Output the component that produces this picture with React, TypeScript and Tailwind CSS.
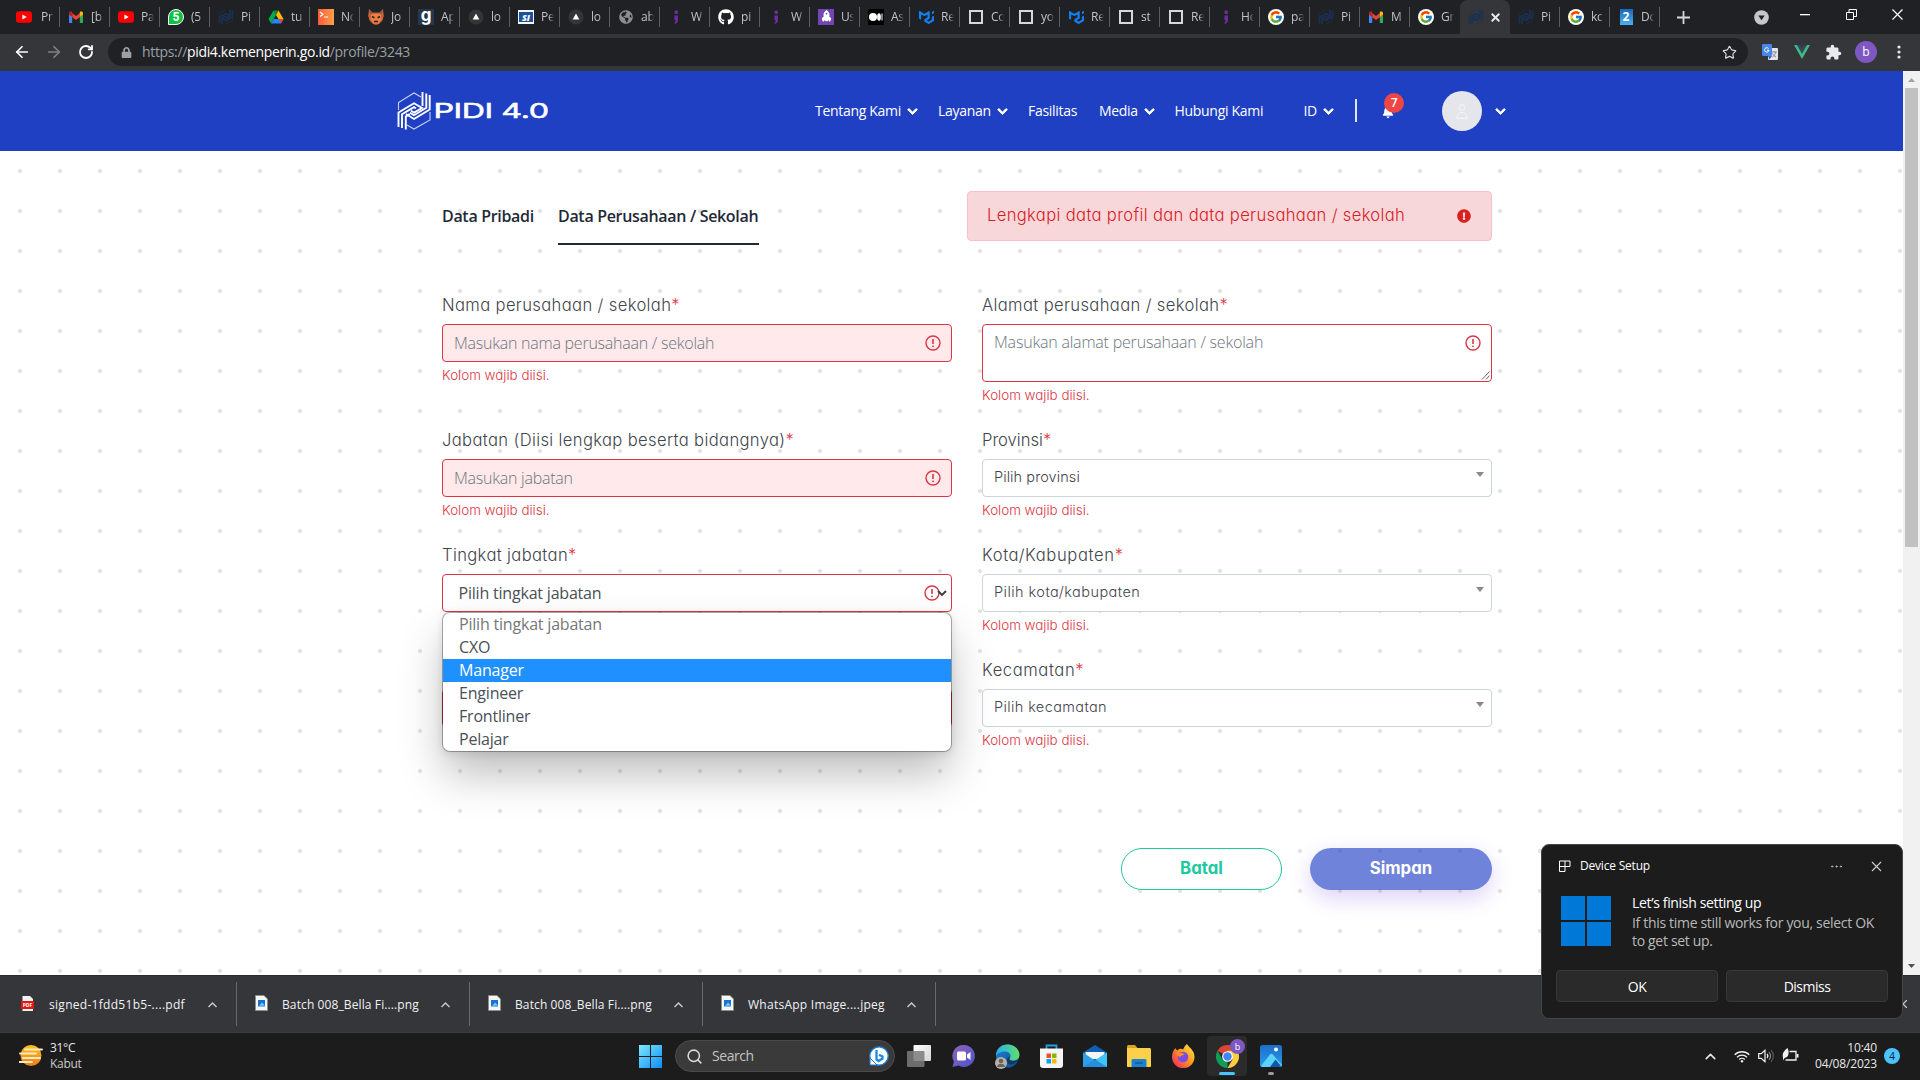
import type { ReactNode } from "react";
import { FaBell, FaChevronDown, FaExclamationCircle, FaGithub, FaGlobeAmericas, FaLock, FaRocket } from "react-icons/fa";
import { FcGoogle } from "react-icons/fc";
import { MdExtension } from "react-icons/md";
import { SiMui } from "react-icons/si";
import { MoreHorizontal, RotateCw, Search, Star, X, ArrowLeft, ArrowRight, ChevronUp } from "lucide-react";

/* ---------- favicons ---------- */

const YouTube = () => (
  <svg width="16" height="16" viewBox="0 0 16 16"><rect y="2.3" width="16" height="11.4" rx="3" fill="#f00" /><path d="M6.4 5.5v5l4.3-2.5z" fill="#fff" /></svg>
);
const Gmail = () => (
  <svg width="16" height="16" viewBox="0 0 16 16">
    <path d="M1 14V5l3.2 2.4V14z" fill="#4285f4" /><path d="M15 14V5l-3.2 2.4V14z" fill="#34a853" />
    <path d="M4.2 8.2V4L8 6.9 11.8 4v4.2L8 11z" fill="#ea4335" />
    <path d="M1 5.6V4c0-1.700 1.900-2 3-1.200l.2.2v5z" fill="#c5221f" /><path d="M15 5.600V4c0-1.700-1.900-2-3-1.200l-.2.2v5z" fill="#fbbc04" />
  </svg>
);
const WhatsApp = () => (
  <span className="flex h-4 w-4 items-center justify-center rounded-full rounded-bl-[3px] border border-white bg-[#12c143] font-['Roboto',sans-serif] text-[12px] leading-none font-bold text-white">5</span>
);
const Pidi = () => (
  <svg width="16" height="16" viewBox="0 0 16 16" fill="none" stroke="#1a3152" strokeWidth="1.7">
    <path d="M1.500 14.500V8L8 4.700l3.500 1.800M4 15V9.200L8 7.200" /><path d="M14.500 1.500V8L8 11.300 4.500 9.500M12 1v6L8 9" /><path d="M8 15l6.500-3.500V9" strokeWidth=".8" /><path d="M1.500 6V4.500L8 1" strokeWidth=".8" />
  </svg>
);
const Drive = () => (
  <svg width="16" height="16" viewBox="0 0 16 16"><path d="M5.500 1.500h5L8 6z" fill="#188038" /><path d="M5.500 1.500L8 6l-5 8.500L.5 10z" fill="#00ac47" /><path d="M10.500 1.500L15.500 10h-5L8 6z" fill="#ffba00" /><path d="M5.700 10h9.800L13 14.500H3z" fill="#2684fc" /><path d="M13 14.500L15.500 10h-5z" fill="#ea4335" /></svg>
);
const Terminal = () => (
  <svg width="16" height="16" viewBox="0 0 16 16"><defs><linearGradient id="term" x1="0" x2="1"><stop stopColor="#fb5b3a" /><stop offset="1" stopColor="#ffa04a" /></linearGradient></defs><rect width="16" height="16" fill="url(#term)" /><path d="M2 3l3 2.300L2 7.500M6 8h4" stroke="#fff" fill="none" strokeWidth="1.200" /></svg>
);
const Fox = () => (
  <svg width="16" height="16" viewBox="0 0 16 16"><path d="M1 0l3.500 3.500h7L15 0l.8 7-1.300 4.500-3.500 3.500-3 1-3-1-3.500-3.500L.2 7z" fill="#c6613a" /><path d="M3.500 5h9l1 5-3 4.500h-5l-3-4.500z" fill="#ef7f45" /><path d="M4 7.500l2.500 1.300M12 7.500L9.500 8.800M6 12.500h4" stroke="#2b1f1b" strokeWidth="1.500" /><path d="M1.500 2.500l2.500 2M14.500 2.500l-2.500 2" stroke="#3a5f7d" /></svg>
);
const LetterG = () => <span className="flex h-4 w-4 items-center justify-center bg-[#27384d] pb-1 font-['Inter',sans-serif] text-[17px] leading-none font-bold text-white">g</span>;
const Vercel = () => (
  <svg width="16" height="16" viewBox="0 0 16 16"><circle cx="8" cy="8" r="7.500" fill="#353535" /><path d="M8 4.500L11.300 10.500H4.700z" fill="#fff" /></svg>
);
const Sitepoint = () => <span className="flex h-3.5 w-4 items-center justify-center bg-[#f4f7fb]"><span className="flex h-2.5 w-3.5 items-center justify-center bg-[#1c5299] text-[9px] leading-none font-extrabold text-white italic">SI</span></span>;
const Globe = () => <FaGlobeAmericas size={14} color="#8b8d90" />;
const Semicolon = () => <svg width="16" height="16" viewBox="0 0 16 16" fill="#6f2da0"><rect x="6.500" y="1.500" width="3.400" height="3.400" rx="1" /><path d="M6.500 6.500h3.400v4.500c0 2.500-1 3.500-3.200 3.800V13c1-.3 1.200-.8 1-1.800H6.500z" /></svg>;
const Github = () => <FaGithub size={16} color="#fff" />;
const Rocket = () => <span className="flex h-4 w-4 items-center justify-center bg-[#7446b4]"><FaRocket size={11} color="#fff" className="-rotate-45" /></span>;
const Medium = () => <svg width="16" height="16" viewBox="0 0 16 16"><rect width="16" height="16" fill="#000" /><circle cx="5" cy="8" r="4" fill="#fff" /><ellipse cx="11" cy="8" rx="1.900" ry="3.800" fill="#fff" /><rect x="13.500" y="4.500" width="1" height="7" fill="#fff" /></svg>;
const Mui = () => <SiMui size={15} color="#1280f5" />;
const Square = () => <span className="h-3.5 w-3.5 border-2 border-[#d8d8d8]" />;
const Google = () => <span className="flex h-4 w-4 items-center justify-center rounded-full bg-white"><FcGoogle size={14} /></span>;
const Two = () => <span className="flex h-4 w-[13px] items-center justify-center bg-gradient-to-b from-[#1a67b8] to-[#4bb0f0] text-[12px] leading-none font-bold text-white">2</span>;

const tabs: { icon: () => ReactNode; text: string; active?: boolean }[] = [
  { icon: YouTube, text: "Pr" }, { icon: Gmail, text: "[b" }, { icon: YouTube, text: "Pa" }, { icon: WhatsApp, text: "(5" },
  { icon: Pidi, text: "Pi" }, { icon: Drive, text: "tu" }, { icon: Terminal, text: "No" }, { icon: Fox, text: "Jo" },
  { icon: LetterG, text: "Ap" }, { icon: Vercel, text: "lo" }, { icon: Sitepoint, text: "Pe" }, { icon: Vercel, text: "lo" },
  { icon: Globe, text: "ab" }, { icon: Semicolon, text: "W" }, { icon: Github, text: "pi" }, { icon: Semicolon, text: "W" },
  { icon: Rocket, text: "Us" }, { icon: Medium, text: "As" }, { icon: Mui, text: "Re" }, { icon: Square, text: "Co" },
  { icon: Square, text: "yo" }, { icon: Mui, text: "Re" }, { icon: Square, text: "st" }, { icon: Square, text: "Re" },
  { icon: Semicolon, text: "Ho" }, { icon: Google, text: "pa" }, { icon: Pidi, text: "Pi" }, { icon: Gmail, text: "M" },
  { icon: Google, text: "Gr" }, { icon: Pidi, text: "", active: true }, { icon: Pidi, text: "Pi" }, { icon: Google, text: "kc" },
  { icon: Two, text: "Dc" },
];

function TabStrip() {
  return (
    <div className="flex h-[34px] shrink-0 items-center bg-[#202124]">
      <div className="w-2.5 shrink-0" />
      {tabs.map((t, i) => (
        <div key={i} className={t.active ? "relative flex h-full w-[50px] shrink-0 items-center rounded-t-lg bg-[#35363a] pl-2" : "flex h-5 w-[50px] shrink-0 items-center pl-2 " + (tabs[i + 1]?.active ? "" : "border-r border-[#5a5c60]")}>
          <span className={"flex h-4 w-4 shrink-0 items-center justify-center " + (i === 0 ? "-ml-0.5" : "")}><t.icon /></span>
          {t.active ? (
            <X size={13} strokeWidth={3.500} className="ml-[5px] text-[#e8eaed]" />
          ) : (
            <span className={"w-[13px] overflow-hidden text-[12px] leading-5 tracking-[-0.2px] whitespace-nowrap text-[#bfc3c8] [mask-image:linear-gradient(to_right,black_60%,transparent)] " + (i === 0 ? "ml-[9px]" : "ml-[7px]")}>{t.text}</span>
          )}
        </div>
      ))}
      <svg width="13" height="13" viewBox="0 0 13 13" className="ml-[17px]"><path d="M6.500 0v13M0 6.500h13" stroke="#d5d7da" strokeWidth="1.800" /></svg>
      <svg width="15" height="15" viewBox="0 0 15 15" className="ml-[64px]"><circle cx="7.500" cy="7.500" r="7.300" fill="#c4c7cb" /><path d="M4.300 5.500h6.400L7.500 10.300z" fill="#202124" /></svg>
      <svg width="10" height="2" className="-mt-1 ml-[31px]"><rect width="10" height="1.300" fill="#fff" /></svg>
      <svg width="11" height="11" viewBox="0 0 11 11" fill="none" stroke="#fff" className="-mt-1.5 ml-[36px]"><path d="M.5 3.500h7v7h-7zM3 3.500V.5h7.500v7h-3" /></svg>
      <svg width="11" height="11" viewBox="0 0 11 11" className="-mt-1.5 ml-[35px]"><path d="M.5.5l10 10M10.500.5l-10 10" stroke="#fff" strokeWidth="1.200" /></svg>
    </div>
  );
}

function Toolbar() {
  return (
    <div className="flex h-[37px] shrink-0 items-center bg-[#35363a] pb-px pl-[13px]">
      <ArrowLeft size={18} strokeWidth={2.300} className="text-white" />
      <ArrowRight size={18} strokeWidth={2.300} className="ml-[14px] text-[#7f8186]" />
      <RotateCw size={16} strokeWidth={2.700} className="ml-[15px] text-white" />
      <div className="ml-[14px] flex h-7 w-[1640px] items-center rounded-full bg-[#202124] pr-[11px] pl-[12px]">
        <FaLock size={11} color="#9aa0a6" className="ml-px" />
        <span className="-mt-px ml-2.5 text-[14px] tracking-[-0.34px] text-[#9aa0a6]">
          https://<span className="text-white">pidi4.kemenperin.go.id</span>/profile/3243
        </span>
        <Star size={15} strokeWidth={1.900} className="ml-auto text-[#d5d7da]" />
      </div>
      <svg width="16" height="16" viewBox="0 0 16 16" className="ml-[14px]">
        <rect x="6" y="4" width="10" height="12" rx="1" fill="#e3e5e8" /><rect width="10" height="12" rx="1" fill="#4a86e8" /><path d="M6.500 4.500a2.200 2.200 0 1 0 .5 1.800H5" stroke="#fff" fill="none" /><path d="M9 8h6M12 7v1M10.500 13c2-1.500 3-3 3-5M10.500 9.500c.8 1.800 2 3 3.500 3.500" stroke="#6b7b8c" strokeWidth=".8" fill="none" /><path d="M6 12h4l-2.500 3.500z" fill="#3563c9" />
      </svg>
      <svg width="16" height="16" viewBox="0 0 16 16" className="ml-4"><path d="M0 1h3.200L8 9.500 12.800 1H16L8 15z" fill="#41b883" /><path d="M3.200 1h3L8 4.200 9.800 1h3L8 9.500z" fill="#35495e" /></svg>
      <MdExtension size={17} color="#e8eaed" className="ml-[15px]" />
      <span className="ml-[13px] flex h-[22px] w-[22px] items-center justify-center rounded-full bg-[#7e57c2] pb-px text-[12px] text-white">b</span>
      <svg width="4" height="14" viewBox="0 0 4 14" fill="#e8eaed" className="ml-5"><circle cx="2" cy="2" r="1.600" /><circle cx="2" cy="7" r="1.600" /><circle cx="2" cy="12" r="1.600" /></svg>
    </div>
  );
}

/* ---------- site header ---------- */

function Logo() {
  return (
    <svg width="152" height="40" viewBox="0 0 152 40" fill="none" stroke="#fff">
      <g strokeWidth="1.100" opacity=".75"><path d="M1.500 19v-7.500L17 2l7 4" /><path d="M33 21v8L17 38l-7-4" /></g>
      <g strokeWidth="1.900">
        <path d="M1.500 36V21.500L17 12.300l8 4.700-8 4.600-3-1.800" /><path d="M5 37V23.300l12-7.200 2 1.200" /><path d="M8.800 38.500V25.500l4-2.400" />
        <path d="M32.700 4v14.500L17 28l-8-5" /><path d="M29.300 2.500v14.200L17 24.200l-4-2.500" /><path d="M25.500 1v14" />
      </g>
      <text x="36.500" y="27" textLength="115" lengthAdjust="spacingAndGlyphs" fill="#fff" stroke="#fff" strokeWidth=".5" fontSize="20.500" fontWeight="400" fontFamily="Inter, sans-serif">PIDI 4.0</text>
    </svg>
  );
}
const Caret = () => <FaChevronDown size={11} stroke="currentColor" strokeWidth={45} className="mt-[3px]" />;

function Header() {
  return (
    <header className="flex h-20 shrink-0 items-center bg-[#2040c4] pl-[397px] text-[14px] tracking-[-0.3px] whitespace-nowrap text-white">
      <Logo />
      <nav className="-mt-0.5 ml-[266px] flex items-center">
        <span className="flex w-[123px] items-center gap-1.5">Tentang Kami<Caret /></span>
        <span className="flex w-[90px] items-center gap-1.5">Layanan<Caret /></span>
        <span className="w-[71px]">Fasilitas</span>
        <span className="flex w-[75.500px] items-center gap-1.5">Media<Caret /></span>
        <span className="w-[129px]">Hubungi Kami</span>
        <span className="flex w-[51.500px] items-center gap-1.5">ID<Caret /></span>
      </nav>
      <span className="-mt-px h-[23px] w-0.5 bg-[#dfe5fa]" />
      <span className="relative ml-[25px] flex h-[22px] w-[22px] items-end">
        <FaBell size={12} className="mb-[4px]" />
        <span className="absolute -top-[7px] left-[2px] flex h-5 w-5 items-center justify-center rounded-full bg-[#ee4545] pb-px text-[12px] font-semibold">7</span>
      </span>
      <span className="ml-[38px] flex h-10 w-10 items-center justify-center rounded-full bg-[#e4e6eb]">
        <svg width="12" height="15" viewBox="0 0 12 15" fill="none" stroke="#f4f5f8"><circle cx="6" cy="3.500" r="2.800" /><path d="M1 14.300C1 6.500 11 6.500 11 14.300z" /></svg>
      </span>
      <span className="-mt-0.5 ml-[13px]"><Caret /></span>
    </header>
  );
}

/* ---------- form ---------- */

const Invalid = ({ className }: { className?: string }) => (
  <svg width="16" height="16" viewBox="0 0 16 16" fill="none" stroke="#dc3545" className={className}><circle cx="8" cy="8" r="7" strokeWidth="1.400" /><path d="M8 4v5" strokeWidth="1.600" /><circle cx="8" cy="11.300" r=".5" strokeWidth="1" fill="#dc3545" /></svg>
);

function Field({ label, children, covered, tracking = "tracking-[0.36px]" }: { label: string; children: ReactNode; covered?: boolean; tracking?: string }) {
  return (
    <div>
      <div className={"mb-2 h-6 font-['Inter',sans-serif] text-[16.6px] leading-[26px] font-light whitespace-nowrap text-[#3f464d] [font-feature-settings:'cv11'] " + tracking}>
        {label}{label && <span className="text-[#dc3545]">*</span>}
      </div>
      {children}
      {!covered && <div className="mt-[3px] font-['Inter',sans-serif] text-[13.4px] leading-5 font-light text-[#dc3545] [font-feature-settings:'cv11']">Kolom wajib diisi.</div>}
    </div>
  );
}
function TextInput({ text }: { text: string }) {
  return (
    <div className="flex h-[38px] items-center justify-between rounded border border-[#dc3545] bg-[#ffe9ea] pr-[10px] pl-[11px] text-[16px] font-light tracking-[-0.24px] text-[#6c757d]">
      <span className="-mt-px">{text}</span><Invalid />
    </div>
  );
}
function Combo({ text, tracking }: { text: string; tracking: string }) {
  return (
    <div className="flex h-[38px] items-center justify-between rounded border border-[#ced4da] bg-white pr-[7px] pl-[11px]">
      <span className={"-mt-[3px] font-['Inter',sans-serif] text-[14.5px] font-light text-[#3f464d] [font-feature-settings:'cv11'] " + tracking}>{text}</span>
      <svg width="8" height="5" className="mb-2"><path d="M0 0h8L4 5z" fill="#888" /></svg>
    </div>
  );
}

function LevelSelect() {
  const options = ["Pilih tingkat jabatan", "CXO", "Manager", "Engineer", "Frontliner", "Pelajar"];
  return (
    <div className="relative flex h-[38px] items-center rounded border border-[#dc3545] bg-white pl-[15.500px] text-[16px] tracking-[-0.2px] text-[#495057]">
      <span className="-mt-px">{options[0]}</span>
      <Invalid className="ml-auto" />
      <svg width="10" height="7" viewBox="0 0 10 7" className="mr-1 -ml-[3px]"><path d="M1 1l4 4 4-4" fill="none" stroke="#343a40" strokeWidth="1.800" /></svg>
      <div className="absolute top-[37px] -left-px z-10 w-[510px] overflow-hidden rounded-lg border border-black/30 bg-white bg-clip-padding shadow-[0_24px_44px_-2px_rgba(0,0,0,0.26),0_2px_8px_rgba(0,0,0,0.1)]">
        {options.map((o, i) => (
          <div key={o} className={"h-[23px] pl-4 leading-[22px] " + (i === 2 ? "bg-[#1e90ff] font-medium text-white" : i === 0 ? "text-[#75787b]" : "")}>{o}</div>
        ))}
      </div>
    </div>
  );
}

function ProfilePage() {
  return (
    <main className="flex grow flex-col bg-white bg-[radial-gradient(circle,#e3e3e4_1.700px,transparent_2.300px)] bg-[size:40px_40px] pt-10 pl-[442px] text-[#495057]">
      <div className="flex h-[101px] w-[1050px] items-start justify-between">
        <div className="flex gap-6 text-[16px] leading-[50px] font-semibold tracking-[-0.32px] text-[#1f2937]">
          <span className="w-[92px] whitespace-nowrap">Data Pribadi</span>
          <span className="h-[54px] w-[201px] border-b-2 border-[#1f2937] whitespace-nowrap">Data Perusahaan / Sekolah</span>
        </div>
        <div className="flex h-[50px] w-[525px] items-center justify-between rounded border border-[#f5c2c7] bg-[#f8d7da] pr-5 pb-px pl-[19px]">
          <span className="font-['Inter',sans-serif] text-[16.6px] font-light tracking-[0.34px] whitespace-nowrap text-[#d9201f] [font-feature-settings:'cv11']">Lengkapi data profil dan data perusahaan / sekolah</span>
          <FaExclamationCircle size={14} color="#d9201f" />
        </div>
      </div>
      <div className="grid w-[1050px] grid-cols-[510px_510px] grid-rows-[135px_115px_115px_115px] gap-x-[30px]">
        <Field label="Nama perusahaan / sekolah"><TextInput text="Masukan nama perusahaan / sekolah" /></Field>
        <Field label="Alamat perusahaan / sekolah">
          <div className="relative flex h-[58px] items-start justify-between rounded border border-[#dc3545] bg-white pt-[6px] pr-[10px] pl-[11px] text-[16px] leading-[22px] font-light tracking-[-0.2px] text-[#6c757d]">
            Masukan alamat perusahaan / sekolah<Invalid className="mt-1" />
            <svg width="9" height="9" className="absolute right-px bottom-px"><path d="M1 8.500l7.500-8M5 8.500l3.500-4" stroke="#555" strokeWidth=".9" /></svg>
          </div>
        </Field>
        <Field label="Jabatan (Diisi lengkap beserta bidangnya)"><TextInput text="Masukan jabatan" /></Field>
        <Field label="Provinsi" tracking="tracking-[0px]"><Combo text="Pilih provinsi" tracking="tracking-[0.08px]" /></Field>
        <Field label="Tingkat jabatan" covered><LevelSelect /></Field>
        <Field label="Kota/Kabupaten" tracking="tracking-[0.62px]"><Combo text="Pilih kota/kabupaten" tracking="tracking-[0.45px]" /></Field>
        <Field label="" covered><TextInput text="" /></Field>
        <Field label="Kecamatan" tracking="tracking-[0.58px]"><Combo text="Pilih kecamatan" tracking="tracking-[0.38px]" /></Field>
      </div>
      <div className="mt-[76px] flex w-[1050px] justify-end gap-7 font-['Inter',sans-serif] text-[16.8px] font-bold [font-feature-settings:'cv11']">
        <button className="h-[42px] w-[161px] rounded-full border border-[#20c9a0] bg-white text-[#20c9a0]">Batal</button>
        <button className="h-[42px] w-[182px] rounded-full bg-[#2040c4]/65 text-white shadow-[0_8px_22px_rgba(100,50,220,0.22)]">Simpan</button>
      </div>
    </main>
  );
}

function Scrollbar() {
  return (
    <div className="flex w-[17px] shrink-0 flex-col items-center bg-[#f1f1f1] py-[7px]">
      <svg width="7" height="4"><path d="M0 4h7L3.500 0z" fill="#a3a3a3" /></svg>
      <div className="mt-[6px] h-[459px] w-[13px] bg-[#c1c1c1]" />
      <svg width="7" height="4" className="mt-auto"><path d="M0 0h7L3.500 4z" fill="#505050" /></svg>
    </div>
  );
}

/* ---------- downloads ---------- */

const PdfFile = () => <svg width="13" height="15" viewBox="0 0 13 15"><path d="M1.500 0H9l3 3v12H1.500z" fill="#eef0f2" /><rect y="5" width="13" height="8" fill="#e2160f" /><text x="6.500" y="11" fontSize="5" fontWeight="700" textAnchor="middle" fill="#fff">PDF</text></svg>;
const ImgFile = () => <svg width="13" height="16" viewBox="0 0 13 16"><path d="M.5.5H9l3.500 3.500v11.500H.5z" fill="#f6f6f4" stroke="#8d8d8a" strokeWidth=".8" /><rect x="3" y="5" width="7" height="6.500" fill="#1673d2" /><path d="M4 11l3-3.500 3 3z" fill="#7cc6f5" /></svg>;
const downloads = [
  { name: "signed-1fdd51b5-....pdf", pdf: true, tracking: "tracking-[0.29px]" },
  { name: "Batch 008_Bella Fi....png", tracking: "tracking-[0.11px]" },
  { name: "Batch 008_Bella Fi....png", tracking: "tracking-[0.11px]" },
  { name: "WhatsApp Image....jpeg", tracking: "tracking-[0.26px]" },
];
function Downloads() {
  return (
    <div className="flex h-[57px] shrink-0 items-center border-t border-[#2a2b2e] bg-[#35363a]">
      {downloads.map((d, i) => (
        <div key={i} className={"flex h-11 shrink-0 items-center border-r border-[#66686c] text-[12px] whitespace-nowrap text-[#f1f2f3] " + (i === 0 ? "w-[237px] pl-[21px]" : "w-[233px] pl-[18px]")}>
          {d.pdf ? <span className="-mt-0.5"><PdfFile /></span> : <span className="-mt-0.5"><ImgFile /></span>}
          <span className={"mt-px w-[152px] " + (d.pdf ? "ml-[15px] " : "ml-[14px] ") + d.tracking}>{d.name}</span>
          <svg width="11" height="7" viewBox="0 0 11 7" className="ml-[6px]"><path d="M1.500 6l4-4 4 4" fill="none" stroke="#c5c7ca" strokeWidth="1.500" /></svg>
        </div>
      ))}
      <X size={14} strokeWidth={2} className="mr-[10px] ml-auto text-[#c5c7ca]" />
    </div>
  );
}

/* ---------- taskbar ---------- */

function TaskIcon({ children }: { children: ReactNode }) {
  return <span className="flex w-11 shrink-0 items-center justify-center">{children}</span>;
}
function Taskbar() {
  return (
    <div className="flex h-12 shrink-0 items-center border-t border-[#3a3b3e] bg-[#1c1c1c] pb-px text-[#e8e8e8]">
      <div className="flex w-[639px] shrink-0 items-center pl-[19px]">
        <svg width="25" height="24" viewBox="0 0 25 24">
          <defs><linearGradient id="sun" x2="0" y2="1"><stop stopColor="#fcc419" /><stop offset="1" stopColor="#f0791a" /></linearGradient></defs>
          <circle cx="12" cy="11.500" r="10.500" fill="url(#sun)" />
          <path d="M6 5.500h17M1 9.500h16M4 14h17M0 18h13" stroke="#f6e9c4" strokeWidth="1.900" strokeLinecap="round" />
        </svg>
        <div className="ml-1.5 text-[12px] leading-4 tracking-[-0.3px]"><div>31°C</div><div className="text-[#c9c9c9]">Kabut</div></div>
      </div>
      <svg width="23" height="23" viewBox="0 0 23 23">
        <defs><linearGradient id="win" x2="1" y2="1"><stop stopColor="#7fe8fb" /><stop offset="1" stopColor="#0a8dfb" /></linearGradient></defs>
        <path d="M0 0h11v11H0zM12 0h11v11H12zM0 12h11v11H0zM12 12h11v11H12z" fill="url(#win)" />
      </svg>
      <div className="ml-[13px] flex h-8 w-[220px] items-center rounded-full border border-[#4b4b4b] bg-[#3a3a3a] pr-[5px] pl-[10px] text-[14px] tracking-[-0.45px] text-[#c4c4c4]">
        <Search size={17} strokeWidth={2.200} className="text-[#dcdcdc]" />
        <span className="-mt-px ml-[9px]">Search</span>
        <svg width="20" height="20" viewBox="0 0 20 20" className="ml-auto"><circle cx="10" cy="10" r="9.300" fill="#fff" stroke="#1976d2" strokeWidth="1.400" /><path d="M1 12v7h7z" fill="#fff" stroke="#1976d2" /><path d="M7.500 4v9.500l2 1.500 4-2.500v-2L10 8.800" fill="none" stroke="#1b8ae0" strokeWidth="2.300" /></svg>
      </div>
      <div className="ml-0.5 flex items-center">
        <TaskIcon><svg width="24" height="22" viewBox="0 0 24 22"><defs><linearGradient id="tv" x2="1" y2="1"><stop stopColor="#fff" /><stop offset="1" stopColor="#d5d5d5" /></linearGradient></defs><rect x="6.500" y="0" width="17.500" height="16" rx="1" fill="url(#tv)" /><rect y="6" width="17.500" height="16" rx="1" fill="#7b7b7b" opacity=".85" /></svg></TaskIcon>
        <TaskIcon><svg width="23" height="22" viewBox="0 0 23 22"><defs><linearGradient id="chat" x2="1" y2="1"><stop stopColor="#9163b8" /><stop offset="1" stopColor="#4a55cf" /></linearGradient></defs><path d="M11.500 0a11 11 0 1 1-5 20.600L.5 22l1.400-5.500A11 11 0 0 1 11.500 0z" fill="url(#chat)" /><rect x="5" y="6.500" width="9" height="9" rx="1.500" fill="#fff" /><path d="M15 9.500l3.500-2.500v8L15 12.500z" fill="#fff" /></svg></TaskIcon>
        <TaskIcon>
          <svg width="25" height="25" viewBox="0 0 25 25"><defs><linearGradient id="e1" x2="1"><stop stopColor="#2aaef0" /><stop offset="1" stopColor="#5fe06c" /></linearGradient><linearGradient id="e2" x2="1" y2="1"><stop stopColor="#1b86d8" /><stop offset="1" stopColor="#0c4a95" /></linearGradient></defs><circle cx="12.500" cy="12" r="11.500" fill="url(#e2)" /><path d="M1 12C1 5 6 .5 12.500.5 20 .5 24.500 6 24.500 11c0 4-3.500 5.500-6.500 5.500-2.800 0-4.300-1.300-3-2.800 1.500-2.200-.3-6.200-5-6.200C5.500 7.500 2 9.500 1 12z" fill="url(#e1)" /><path d="M15 13.500c-1.500 2 .5 3.500 3 3.500 1.500 0 3.500-.3 5-1.200-2 3.700-5.500 5-8 4.600-3-.6-4-5-2-7.500z" fill="#1c1c1c" opacity=".55" /><circle cx="6" cy="19" r="6" fill="#b9b2ab" /><circle cx="6" cy="17" r="2.300" fill="#6a625c" /><path d="M2 23c0-4.500 8-4.500 8 0z" fill="#6a625c" /></svg>
        </TaskIcon>
        <TaskIcon><svg width="23" height="24" viewBox="0 0 23 24"><path d="M6.500 6V1.500h10V6" fill="none" stroke="#1ea0e8" strokeWidth="1.800" /><path d="M0 4.500h23V21a3 3 0 0 1-3 3H3a3 3 0 0 1-3-3z" fill="#f5f5f5" /><path d="M6.500 9.500h4.500V14H6.500z" fill="#f25022" /><path d="M12 9.500h4.500V14H12z" fill="#7fba00" /><path d="M6.500 15h4.500v4.500H6.500z" fill="#00a4ef" /><path d="M12 15h4.500v4.500H12z" fill="#ffb900" /></svg></TaskIcon>
        <TaskIcon><svg width="24" height="22" viewBox="0 0 24 22"><path d="M0 7.500L12 0l12 7.500V22H0z" fill="#0e5fae" /><path d="M2.500 7h19v7h-19z" fill="#f2f5f8" /><path d="M0 7.500l12 8 12-8V22H0z" fill="#2f9fe8" /><path d="M12 15.500l12-8V22L12 15z" fill="#40c4f5" /><path d="M0 22L12 14l12 8z" fill="#1b7fd1" opacity=".5" /></svg></TaskIcon>
        <TaskIcon><svg width="24" height="22" viewBox="0 0 24 22"><path d="M0 1.500C0 .7.700 0 1.500 0H8l2.500 3H0z" fill="#e0a21a" /><path d="M0 3h22.500c.8 0 1.500.7 1.500 1.500V21c0 .6-.4 1-1 1H1c-.6 0-1-.4-1-1z" fill="#fcd04b" /><path d="M4.500 15.500c0-.8.7-1.500 1.500-1.500h12c.8 0 1.500.7 1.500 1.500V22h-15z" fill="#1c82d0" /><path d="M8 18h8" stroke="#115a98" strokeWidth="1.500" /></svg></TaskIcon>
        <TaskIcon><svg width="24" height="24" viewBox="0 0 24 24"><defs><linearGradient id="ff" x1="1" x2="0" y2="1"><stop stopColor="#fff04a" /><stop offset=".45" stopColor="#ff9a1f" /><stop offset="1" stopColor="#f5156c" /></linearGradient></defs><path d="M16 0c1 3 7.500 5.500 7.500 13A11 11 0 0 1 1 13c0-4 1.500-7 3.500-9 .2 1.500 1 2 2 2.300C8.500 4 11 4.500 12 5.500c1-2 2-4 4-5.500z" fill="url(#ff)" /><circle cx="12" cy="13" r="5.300" fill="#7b4be0" /><path d="M5 9c3-2 6 0 8.500 1-1 2-4 1-4.500 3.500C8 12 5.500 11.500 5 9z" fill="#ff8a2a" /></svg></TaskIcon>
        <TaskIcon>
          <span className="relative flex h-10 w-10 items-center justify-center rounded bg-[#2b2b2b]">
            <svg width="23" height="23" viewBox="0 0 24 24"><path d="M12 12L1.600 6A12 12 0 0 1 22.400 6z" fill="#db4437" /><path d="M12 12v12A12 12 0 0 1 1.600 6l5 9z" fill="#0f9d58" /><path d="M12 6h10.400a12 12 0 0 1-10.400 18l5.200-9z" fill="#ffcd40" /><circle cx="12" cy="12" r="5.600" fill="#fff" /><circle cx="12" cy="12" r="4.400" fill="#4285f4" /></svg>
            <span className="absolute top-[3px] right-[2px] flex h-[15px] w-[15px] items-center justify-center rounded-full bg-[#7e57c2] text-[9px] text-white">b</span>
            <span className="absolute bottom-px h-[3px] w-4 rounded-full bg-[#4cc2ff]" />
          </span>
        </TaskIcon>
        <TaskIcon>
          <span className="relative flex h-10 w-10 items-center justify-center">
            <svg width="22" height="22" viewBox="0 0 22 22"><defs><linearGradient id="ph" x2="0" y2="1"><stop stopColor="#1d6fc9" /><stop offset="1" stopColor="#2a9be8" /></linearGradient></defs><rect width="22" height="22" rx="2.500" fill="url(#ph)" /><path d="M1 21L10 9.500c.8-1 2-1 2.800 0L22 20c-.5 1.500-1.500 2-3 2H3c-1 0-2-.5-2-1z" fill="#5ad2fa" /><path d="M10 22l5.500-7.500L21 21c-.5.700-1.500 1-2.500 1z" fill="#1059a8" /><circle cx="16" cy="4.500" r="2" fill="#fff" /></svg>
            <span className="absolute bottom-px h-[3px] w-1.5 rounded-full bg-[#9a9a9a]" />
          </span>
        </TaskIcon>
      </div>
      <ChevronUp size={17} strokeWidth={2.200} className="mr-[15px] ml-auto" />
      <svg width="16" height="13" viewBox="0 0 16 13" fill="none" stroke="#f0f0f0" strokeWidth="1.300"><path d="M.7 4.700a10.500 10.500 0 0 1 14.600 0M3 7.200a7.200 7.200 0 0 1 10 0M5.200 9.500a4 4 0 0 1 5.600 0" /><circle cx="8" cy="11.300" r="1.200" fill="#f0f0f0" stroke="none" /></svg>
      <svg width="16" height="14" viewBox="0 0 16 14" fill="none" stroke="#f0f0f0" strokeWidth="1.200" className="ml-2"><path d="M.7 4.700h2.500L7 1.300v11.400L3.200 9.300H.7z" /><path d="M9 5a3 3 0 0 1 0 4" /><path d="M11 3.200a5.500 5.500 0 0 1 0 7.600" stroke="#8a8a8a" /><path d="M13 1.300a8 8 0 0 1 0 11.400" stroke="#555" /></svg>
      <svg width="17" height="14" viewBox="0 0 17 14" className="-mt-0.5 ml-2"><path d="M7.500 3.500H14v8.500H3.500" fill="none" stroke="#f0f0f0" strokeWidth="1.300" /><rect x="14.500" y="6" width="2" height="3.500" fill="#f0f0f0" /><path d="M1 9.500C0 5 2 3 5.500 0 7.500 4 7 9.500 2.500 10L1 12.500z" fill="#f0f0f0" /></svg>
      <div className="ml-4 text-right text-[12px] leading-4 tracking-[-0.17px]"><div>10:40</div><div>04/08/2023</div></div>
      <span className="mr-5 ml-[7px] flex h-4 w-4 items-center justify-center rounded-full bg-[#4cc2ff] text-[10px] text-[#10222d]">4</span>
    </div>
  );
}

function Toast() {
  return (
    <div className="absolute top-[843.5px] left-[1541px] z-20 h-[175px] w-[362px] rounded-lg border border-[#454545] bg-[#1c1c1c] text-white">
      <div className="flex h-[43px] items-center pl-[17px]">
        <svg width="12" height="12" viewBox="0 0 12 12" fill="none" stroke="#fff"><path d="M.5 1h10.500v5.500H6v5H.5zM6 1v5.500M.5 6.500H6" /></svg>
        <span className="ml-[9px] text-[12px] tracking-[-0.2px]">Device Setup</span>
        <MoreHorizontal size={15} className="ml-auto text-[#bdbdbd]" strokeWidth={1.500} />
        <X size={17} strokeWidth={1.500} className="mr-[17px] ml-[24px] text-[#d0d0d0]" />
      </div>
      <div className="flex pt-[3px] pl-[19px]">
        <div className="mt-[5px] grid h-[50px] w-[50px] grid-cols-2 gap-0.5">
          <span className="bg-[#0078d7]" /><span className="bg-[#0078d7]" /><span className="bg-[#0078d7]" /><span className="bg-[#0078d7]" />
        </div>
        <div className="ml-[21px] text-[14px] whitespace-nowrap">
          <div className="h-5 leading-6 tracking-[-0.34px]">Let’s finish setting up</div>
          <div className="leading-[18px] tracking-[-0.32px] text-[#b9b9b9]">
            <div className="mt-[3px]">If this time still works for you, select OK</div>
            <div>to get set up.</div>
          </div>
        </div>
      </div>
      <div className="mt-[20.5px] flex gap-2 px-[14px] text-[14px] tracking-[-0.5px]">
        <span className="flex h-8 w-[162px] items-center justify-center rounded border border-[#383838] bg-[#2a2a2a]">OK</span>
        <span className="flex h-8 w-[162px] items-center justify-center rounded border border-[#383838] bg-[#2a2a2a]">Dismiss</span>
      </div>
    </div>
  );
}

export default function App() {
  return (
    <div className="relative flex h-[1080px] w-[1920px] flex-col overflow-hidden font-['Open_Sans',sans-serif]">
      <TabStrip />
      <Toolbar />
      <div className="flex h-[904px] shrink-0">
        <div className="flex w-[1903px] flex-col overflow-hidden">
          <Header />
          <ProfilePage />
        </div>
        <Scrollbar />
      </div>
      <Downloads />
      <Taskbar />
      <Toast />
    </div>
  );
}
